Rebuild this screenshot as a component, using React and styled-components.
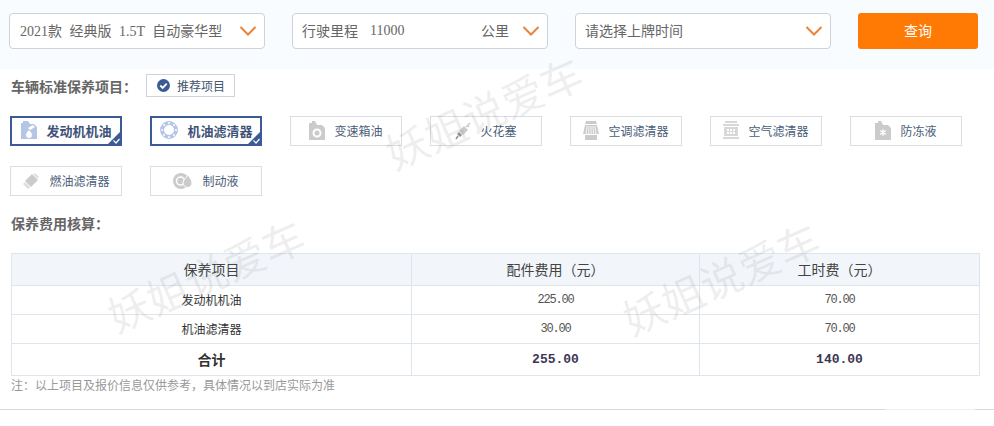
import React from 'react'
import styled, { createGlobalStyle } from 'styled-components'

const GlobalStyle = createGlobalStyle`
    html, body {
        margin: 0;
        padding: 0;
        background: #fff;
    }
    body {
        font-family: "Liberation Sans", "Noto Sans CJK SC", sans-serif;
    }
`

const Page = styled.div`
    position: relative;
    width: 994px;
    height: 426px;
    overflow: hidden;
    background: #fff;
`

const Watermark = styled.div`
    position: absolute;
    left: ${p => p.$x}px;
    top: ${p => p.$y}px;
    font-size: 42px;
    line-height: 42px;
    white-space: nowrap;
    color: rgba(120, 120, 120, 0.12);
    transform: rotate(-24deg);
    pointer-events: none;
    z-index: 5;
`

const SearchBar = styled.div`
    display: flex;
    gap: 27px;
    height: 69px;
    box-sizing: border-box;
    padding: 13px 0 0 9px;
    background: #f8fcff;
`

const SelectBox = styled.div`
    display: flex;
    align-items: center;
    justify-content: space-between;
    width: 256px;
    height: 36px;
    box-sizing: border-box;
    padding: 0 7px 0 ${p => p.$pad || 10}px;
    background: #fff;
    border: 1px solid #ccd3dc;
    border-radius: 4px;
    font-size: 14px;
    color: #666;
`

const SelectText = styled.span`
    margin-top: -2px;
`

const Number = styled.span`
    font-family: "Liberation Serif", serif;
    font-size: 14px;
    color: #666;
    margin: -1px 0 0 12px;
    flex: 1;
`

const Model = styled(SelectText)`
    font-family: "Liberation Serif", "Noto Sans CJK SC", serif;
    word-spacing: 4px;
    white-space: pre;
`

const Unit = styled(SelectText)`
    margin-right: 13px;
`

const Chevron = () => (
    <svg width="18" height="12" viewBox="0 0 18 12" fill="none">
        <path d="M1.5 2 L9 9.5 L16.5 2" stroke="#e8833a" strokeWidth="2" />
    </svg>
)

const SearchButton = styled.button`
    width: 120px;
    height: 36px;
    border: 0;
    border-radius: 3px;
    background: #ff7a05;
    color: #fff;
    font-family: inherit;
    font-size: 14px;
    padding: 0 0 2px;
`

const TitleRow = styled.div`
    display: flex;
    align-items: center;
    height: 23px;
    margin: 5px 0 0 11px;
`

const SectionTitle = styled.h3`
    margin: 0;
    padding-top: 1px;
    font-size: 14px;
    font-weight: 700;
    color: #666;
`

const Tag = styled.div`
    display: flex;
    align-items: center;
    justify-content: center;
    gap: 6px;
    width: 89px;
    height: 23px;
    box-sizing: border-box;
    margin-left: 9px;
    border: 1px solid #ccd3dc;
    font-size: 12px;
    color: #44556f;
`

const ItemGrid = styled.div`
    display: flex;
    flex-wrap: wrap;
    gap: 20px 28px;
    width: 980px;
    margin: 19px 0 0 10px;
`

const Item = styled.div`
    position: relative;
    display: flex;
    align-items: center;
    justify-content: center;
    gap: ${p => (p.$on ? 8 : 9)}px;
    width: 112px;
    height: 30px;
    box-sizing: border-box;
    padding-bottom: ${p => (p.$on ? 2 : 1)}px;
    border: ${p => (p.$on ? '2px solid #3c5a94' : '1px solid #d9dde4')};
    font-size: ${p => (p.$on ? 13 : 12)}px;
    font-weight: ${p => (p.$on ? 700 : 400)};
    color: ${p => (p.$on ? '#3f5377' : '#4a5d78')};
`

const Corner = styled.svg`
    position: absolute;
    right: -2px;
    bottom: -2px;
`

const Title2 = styled(SectionTitle)`
    margin: 18px 0 0 11px;
    padding-top: 0;
    line-height: 20px;
`

const Table = styled.table`
    width: 968px;
    margin: 19px 0 0 11px;
    border-collapse: collapse;
    table-layout: fixed;
    font-size: 12px;
    color: #333;
`

const Th = styled.th`
    height: 32px;
    padding: 0 0 2px;
    box-sizing: border-box;
    border: 1px solid #dfe5ec;
    background: #f2f6fb;
    font-size: 14px;
    font-weight: 400;
    color: #444;
`

const Td = styled.td`
    height: 29px;
    padding: 0 0 1px;
    box-sizing: border-box;
    border: 1px solid #dfe5ec;
    text-align: center;
`

const Money = styled.span`
    font-family: "Liberation Mono", monospace;
    font-size: 12px;
    letter-spacing: -1.2px;
    color: #555;
`

const TotalCell = styled(Td)`
    height: 32px;
    padding-bottom: 2px;
    font-size: 14px;
    font-weight: 700;
`

const TotalMoney = styled.span`
    font-family: "Liberation Mono", monospace;
    font-size: 13px;
    font-weight: 700;
    color: #3d3552;
`

const Note = styled.p`
    margin: 2px 0 0 11px;
    font-size: 12px;
    line-height: 16px;
    color: #999;
`

const Rule = styled.div`
    height: 1px;
    margin-top: 15px;
    background: linear-gradient(90deg, #d9d9d9 885px, #efefef 885px, #efefef 975px, #d9d9d9 975px);
`

const grey = '#cbcbcb'
const blue = '#b4c5e6'

const EngineOil = () => (
    <svg width="18" height="20" viewBox="0 0 18 20">
        <path d="M1 3h2V1h5l2 3h4l3 3v12H1z" fill={blue} />
        <path d="M8 8l5-3 2 2-5 3z" fill="#fff" />
        <path d="M9 10c1.500 2 3 3.200 3 5a3 3 0 0 1-6 0c0-1.800 1.500-3 3-5z" fill="#fff" />
    </svg>
)

const FilterRing = () => (
    <svg width="20" height="20" viewBox="0 0 20 20">
        <circle cx="10" cy="10" r="7" fill="none" stroke={blue} strokeWidth="4" />
        <circle cx="10" cy="3" r="1" fill="#fff" />
        <circle cx="10" cy="17" r="1" fill="#fff" />
        <circle cx="3" cy="10" r="1" fill="#fff" />
        <circle cx="17" cy="10" r="1" fill="#fff" />
        <circle cx="5" cy="5" r="1" fill="#fff" />
        <circle cx="15" cy="5" r="1" fill="#fff" />
        <circle cx="5" cy="15" r="1" fill="#fff" />
        <circle cx="15" cy="15" r="1" fill="#fff" />
    </svg>
)

const GearOil = () => (
    <svg width="16" height="19" viewBox="0 0 16 19">
        <path d="M0 2h3V0h3l2 4h5l3 3v12H0z" fill={grey} />
        <circle cx="8" cy="12" r="3.500" fill="none" stroke="#fff" strokeWidth="2" />
    </svg>
)

const SparkPlug = () => (
    <svg width="16" height="18" viewBox="0 0 16 18">
        <path d="M15 1 11 5M12 3l2 2" stroke={grey} strokeWidth="1.500" />
        <path d="M9 4l4 4-5 5-4-4z" fill={grey} />
        <path d="M4 10l3 3-2 2-3-3z" fill="#8f8f8f" />
        <path d="M3 14 1 17" stroke="#8f8f8f" strokeWidth="1.500" />
    </svg>
)

const AcFilter = () => (
    <svg width="16" height="19" viewBox="0 0 16 19">
        <path d="M3 0h10l1 3H2z" fill={grey} />
        <path d="M2 4h12l2 9H0z" fill={grey} />
        <path d="M4 5 3 13M8 5v8M12 5l1 8M6 5l-.5 8M10 5l.5 8" stroke="#fff" strokeWidth=".8" />
        <path d="M2 14h12v5H2z" fill={grey} />
    </svg>
)

const AirFilter = () => (
    <svg width="16" height="19" viewBox="0 0 16 19">
        <path d="M2 0h12v2H2zM0 3h16v2H0zM1 6h14v9H1zM0 16h16v2H0z" fill="#d8d8d8" />
        <path d="M4 8h2v2H4zM7 8h2v2H7zM10 8h2v2h-2zM4 11h2v2H4zM7 11h2v2H7zM10 11h2v2h-2z" fill="#fff" />
    </svg>
)

const Coolant = () => (
    <svg width="16" height="19" viewBox="0 0 16 19">
        <path d="M0 2h3V0h3l2 4h5l3 3v12H0z" fill={grey} />
        <path d="M8 8v7M5 9.500l6 4M11 9.500l-6 4" stroke="#fff" strokeWidth="1.200" />
    </svg>
)

const FuelFilter = () => (
    <svg width="18" height="18" viewBox="0 0 18 18">
        <path d="M10 2l6 6-7 7-6-6z" fill={grey} />
        <path d="M13 1l4 4-1.500 1.500-4-4z" fill="#dedede" />
        <path d="M3 10l5 5-2 2-5-5z" fill="#dedede" />
    </svg>
)

const BrakeFluid = () => (
    <svg width="20" height="18" viewBox="0 0 20 18">
        <circle cx="8" cy="9" r="8" fill={grey} />
        <circle cx="7.500" cy="9" r="4" fill="none" stroke="#fff" strokeWidth="1.500" />
        <path d="M15 3c2 3 4 5 4 8a4.500 4.500 0 0 1-9 0c0-3 3-5 5-8z" fill={grey} stroke="#fff" strokeWidth="1" />
    </svg>
)

const CheckBadge = () => (
    <svg width="15" height="15" viewBox="0 0 15 15">
        <circle cx="7.500" cy="7.500" r="6.500" fill="#3c5a94" />
        <path d="M4.300 7.500l2.400 2.400 4-4.200" fill="none" stroke="#fff" strokeWidth="1.800" />
    </svg>
)

const items = [
    { name: '发动机机油', icon: EngineOil, on: true },
    { name: '机油滤清器', icon: FilterRing, on: true },
    { name: '变速箱油', icon: GearOil },
    { name: '火花塞', icon: SparkPlug },
    { name: '空调滤清器', icon: AcFilter },
    { name: '空气滤清器', icon: AirFilter },
    { name: '防冻液', icon: Coolant },
    { name: '燃油滤清器', icon: FuelFilter },
    { name: '制动液', icon: BrakeFluid },
]

const rows = [
    ['发动机机油', '225.00', '70.00'],
    ['机油滤清器', '30.00', '70.00'],
]

const App = () => {
    return (
        <Page>
            <GlobalStyle />
            <Watermark $x={380} $y={94}>妖姐说爱车</Watermark>
            <Watermark $x={102} $y={257}>妖姐说爱车</Watermark>
            <Watermark $x={617} $y={260}>妖姐说爱车</Watermark>

            <SearchBar>
                <SelectBox>
                    <Model>2021款 经典版 1.5T 自动豪华型</Model>
                    <Chevron />
                </SelectBox>
                <SelectBox $pad={9}>
                    <SelectText>行驶里程</SelectText>
                    <Number>11000</Number>
                    <Unit>公里</Unit>
                    <Chevron />
                </SelectBox>
                <SelectBox $pad={9}>
                    <SelectText>请选择上牌时间</SelectText>
                    <Chevron />
                </SelectBox>
                <SearchButton>查询</SearchButton>
            </SearchBar>

            <TitleRow>
                <SectionTitle>车辆标准保养项目：</SectionTitle>
                <Tag><CheckBadge />推荐项目</Tag>
            </TitleRow>

            <ItemGrid>
                {items.map(({ name, icon: Icon, on }) => (
                    <Item key={name} $on={on}>
                        <Icon />
                        {name}
                        {on && (
                            <Corner width="16" height="16" viewBox="0 0 16 16">
                                <path d="M16 0v16H0z" fill="#3c5a94" />
                                <path d="M7.500 10.500l2.500 2.500 3.500-4" fill="none" stroke="#fff" strokeWidth="1.200" />
                            </Corner>
                        )}
                    </Item>
                ))}
            </ItemGrid>

            <Title2>保养费用核算：</Title2>

            <Table>
                <colgroup>
                    <col width="400" />
                    <col width="288" />
                    <col width="280" />
                </colgroup>
                <thead>
                    <tr>
                        <Th>保养项目</Th>
                        <Th>配件费用（元）</Th>
                        <Th>工时费（元）</Th>
                    </tr>
                </thead>
                <tbody>
                    {rows.map(([name, part, labor]) => (
                        <tr key={name}>
                            <Td>{name}</Td>
                            <Td><Money>{part}</Money></Td>
                            <Td><Money>{labor}</Money></Td>
                        </tr>
                    ))}
                    <tr>
                        <TotalCell>合计</TotalCell>
                        <TotalCell><TotalMoney>255.00</TotalMoney></TotalCell>
                        <TotalCell><TotalMoney>140.00</TotalMoney></TotalCell>
                    </tr>
                </tbody>
            </Table>

            <Note>注：以上项目及报价信息仅供参考，具体情况以到店实际为准</Note>
            <Rule />
        </Page>
    )
}

export default App
